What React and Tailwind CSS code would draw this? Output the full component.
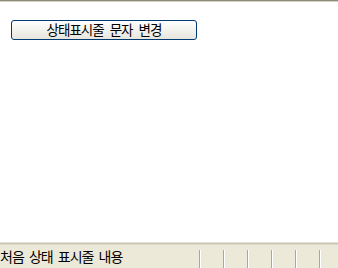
import React from 'react';

const App = () => {
  const panels = [24, 24, 24, 24, 24, 19];

  return (
    <div className="flex flex-col w-[338px] h-[268px] bg-white overflow-hidden font-['Noto_Sans_CJK_KR',sans-serif] text-black">
      {/* top frame edge */}
      <div className="h-[1px] bg-[#8d8b7c]" />
      <div className="h-[1px] bg-[#d4d0c0]" />

      {/* content */}
      <div className="flex-1 pt-[18px] pl-[11px]">
        <button className="w-[186px] h-[20px] flex items-center justify-center rounded-[3px] border border-[#003c74] bg-gradient-to-b from-white to-[#e6e5dd] text-[13.5px] tracking-[-1px] [word-spacing:4px] leading-none">
          상태표시줄 문자 변경
        </button>
      </div>

      {/* status bar */}
      <div className="h-[1px] bg-[#e4e2d6]" />
      <div className="h-[1px] bg-[#c8c5b4]" />
      <div className="h-[1px] bg-[#dcd9c8]" />
      <div className="flex items-end h-[23px] bg-[#ece9d8]">
        <span className="flex-1 self-start pt-[4px] text-[14px] tracking-[-1px] [word-spacing:3px] leading-none">처음 상태 표시줄 내용</span>
        {panels.map((w, i) => (
          <div key={i} className="flex h-[18px]" style={{ width: w }}>
            <div className="w-[1px] bg-[#aca899]" />
            <div className="w-[1px] bg-white" />
            <div className="flex-1" />
          </div>
        ))}
      </div>
    </div>
  );
};

export default App;
